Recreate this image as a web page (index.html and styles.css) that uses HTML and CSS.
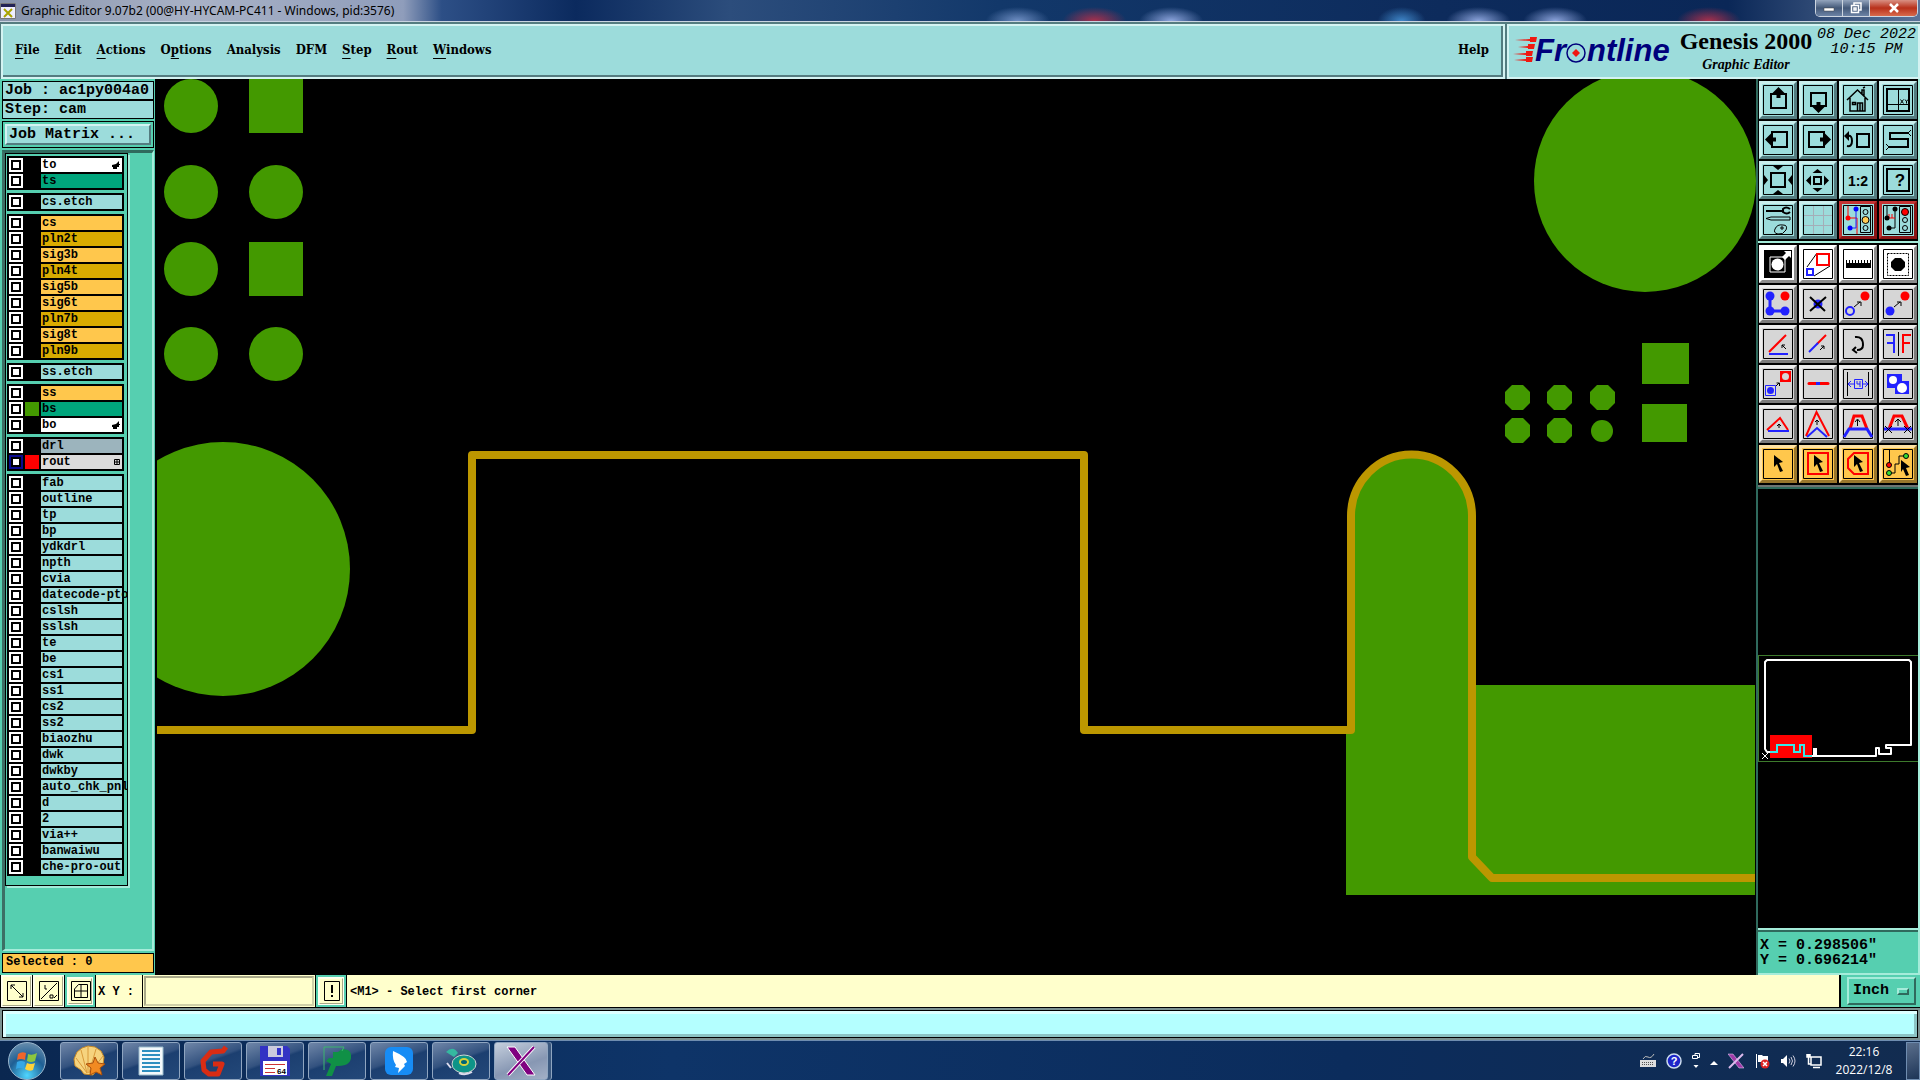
FILE: index.html
```html
<!DOCTYPE html>
<html lang="en">

<head>
  <meta charset="utf-8">
  <meta name="viewport" content="width=device-width, initial-scale=1">
  <title>Graphic Editor 9.07b2</title>
  <link rel="stylesheet" href="styles.css">
</head>

<body>
  <header class="titlebar">
    <svg class="app-icon" viewBox="0 0 16 16"><path fill="#eef" stroke="#777" d="M.5.5h15v15H.5z"/><path fill="#225" d="M1 1h14v3H1z"/><path stroke="#a9a300" stroke-width="2" d="M4 6l8 8M12 6l-8 8"/></svg>
    <h1>Graphic Editor 9.07b2 (00@HY-HYCAM-PC411 - Windows, pid:3576)</h1>
    <div class="window-buttons">
      <button class="win" aria-label="Minimize"><svg viewBox="0 0 12 12"><path fill="#fff" stroke="#444" stroke-width=".5" d="M1 6h10v3H1z"/></svg></button>
      <button class="win" aria-label="Restore"><svg viewBox="0 0 12 12"><path fill="none" stroke="#fff" stroke-width="1.5" d="M4 3V1h7v7H9M1.500 3.500h7v7h-7zM4 6h2v2H4z"/></svg></button>
      <button class="win close" aria-label="Close"><svg viewBox="0 0 12 12"><path stroke="#fff" stroke-width="2.500" d="M2 2l8 8M10 2l-8 8"/></svg></button>
    </div>
  </header>

  <div class="topbar">
    <nav class="menubar">
      <a href="#file"><u>F</u>ile</a>
      <a href="#edit"><u>E</u>dit</a>
      <a href="#actions"><u>A</u>ctions</a>
      <a href="#options">O<u>p</u>tions</a>
      <a href="#analysis">Analysis</a>
      <a href="#dfm">DFM</a>
      <a href="#step"><u>S</u>tep</a>
      <a href="#rout"><u>R</u>out</a>
      <a href="#windows"><u>W</u>indows</a>
      <a class="help" href="#help">Help</a>
    </nav>
    <div class="brand">
      <svg class="logo" viewBox="0 -6 162 46">
        <path fill="#f01810" d="M2 5l15-1V2h7l-1 5h-6V6zM5 12l10-1V9h7l-1 5h-6v-1zM0 19l13-1v-2h7l-1 5h-6v-1zM1 25l12-1v-2h7l-1 5h-6v-1z"/>
        <text class="logo-text" x="22" y="26">Fr</text>
        <text class="logo-text" x="74" y="26">ntline</text>
        <circle cx="63" cy="18" r="9" fill="none" stroke="#00007c" stroke-width="1.500"/>
        <path fill="#f01810" d="M63 14l4 4-4 4-4-4z"/>
      </svg>
      <div class="product"><strong>Genesis 2000</strong><em>Graphic Editor</em></div>
      <div class="date">08 Dec 2022<br>10:15 PM</div>
    </div>
  </div>

  <main class="workspace">
    <aside class="sidebar">
      <div class="job">Job : ac1py004a0</div>
      <div class="job">Step: cam</div>
      <div class="matrix"><button>Job Matrix ...</button></div>
      <div class="layers-panel">
        <div class="layers">
          <div class="group">
            <label class="layer white"><input type="checkbox"><i></i><span>to<svg class="hand" viewBox="0 0 8 8"><path d="M0 4l4-1 3-3v3h1v1H7v2H5v2H1V6H0z"/></svg></span></label>
            <label class="layer green"><input type="checkbox"><i></i><span>ts</span></label>
          </div>
          <div class="group">
            <label class="layer"><input type="checkbox"><i></i><span>cs.etch</span></label>
          </div>
          <div class="group">
            <label class="layer signal"><input type="checkbox"><i></i><span>cs</span></label>
            <label class="layer plane"><input type="checkbox"><i></i><span>pln2t</span></label>
            <label class="layer signal"><input type="checkbox"><i></i><span>sig3b</span></label>
            <label class="layer plane"><input type="checkbox"><i></i><span>pln4t</span></label>
            <label class="layer signal"><input type="checkbox"><i></i><span>sig5b</span></label>
            <label class="layer signal"><input type="checkbox"><i></i><span>sig6t</span></label>
            <label class="layer plane"><input type="checkbox"><i></i><span>pln7b</span></label>
            <label class="layer signal"><input type="checkbox"><i></i><span>sig8t</span></label>
            <label class="layer plane"><input type="checkbox"><i></i><span>pln9b</span></label>
          </div>
          <div class="group">
            <label class="layer"><input type="checkbox"><i></i><span>ss.etch</span></label>
          </div>
          <div class="group">
            <label class="layer signal"><input type="checkbox"><i></i><span>ss</span></label>
            <label class="layer green"><input type="checkbox"><i class="shown-green"></i><span>bs</span></label>
            <label class="layer white"><input type="checkbox"><i></i><span>bo<svg class="hand" viewBox="0 0 8 8"><path d="M0 4l4-1 3-3v3h1v1H7v2H5v2H1V6H0z"/></svg></span></label>
          </div>
          <div class="group">
            <label class="layer drill"><input type="checkbox"><i></i><span>drl</span></label>
            <label class="layer rout"><input type="checkbox" checked><i class="shown-red"></i><span>rout<svg class="hand small" viewBox="0 0 6 6"><path fill="none" stroke="#000" d="M.5.5h5v5h-5zM3 0v6M0 3h6"/></svg></span></label>
          </div>
          <div class="group">
            <label class="layer"><input type="checkbox"><i></i><span>fab</span></label>
            <label class="layer"><input type="checkbox"><i></i><span>outline</span></label>
            <label class="layer"><input type="checkbox"><i></i><span>tp</span></label>
            <label class="layer"><input type="checkbox"><i></i><span>bp</span></label>
            <label class="layer"><input type="checkbox"><i></i><span>ydkdrl</span></label>
            <label class="layer"><input type="checkbox"><i></i><span>npth</span></label>
            <label class="layer"><input type="checkbox"><i></i><span>cvia</span></label>
            <label class="layer"><input type="checkbox"><i></i><span>datecode-pto</span></label>
            <label class="layer"><input type="checkbox"><i></i><span>cslsh</span></label>
            <label class="layer"><input type="checkbox"><i></i><span>sslsh</span></label>
            <label class="layer"><input type="checkbox"><i></i><span>te</span></label>
            <label class="layer"><input type="checkbox"><i></i><span>be</span></label>
            <label class="layer"><input type="checkbox"><i></i><span>cs1</span></label>
            <label class="layer"><input type="checkbox"><i></i><span>ss1</span></label>
            <label class="layer"><input type="checkbox"><i></i><span>cs2</span></label>
            <label class="layer"><input type="checkbox"><i></i><span>ss2</span></label>
            <label class="layer"><input type="checkbox"><i></i><span>biaozhu</span></label>
            <label class="layer"><input type="checkbox"><i></i><span>dwk</span></label>
            <label class="layer"><input type="checkbox"><i></i><span>dwkby</span></label>
            <label class="layer"><input type="checkbox"><i></i><span>auto_chk_pnl</span></label>
            <label class="layer"><input type="checkbox"><i></i><span>d</span></label>
            <label class="layer"><input type="checkbox"><i></i><span>2</span></label>
            <label class="layer"><input type="checkbox"><i></i><span>via++</span></label>
            <label class="layer"><input type="checkbox"><i></i><span>banwaiwu</span></label>
            <label class="layer"><input type="checkbox"><i></i><span>che-pro-out</span></label>
          </div>
        </div>
      </div>
      <div class="selected">Selected : 0</div>
    </aside>

    <section class="canvas">
      <svg viewBox="157 79 1599 896" preserveAspectRatio="xMinYMin slice">
        <g fill="#439900">
          <circle cx="191" cy="106" r="27"/><path d="M249 79h54v54h-54z"/>
          <circle cx="191" cy="192" r="27"/><circle cx="276" cy="192" r="27"/>
          <circle cx="191" cy="269" r="27"/><path d="M249 242h54v54h-54z"/>
          <circle cx="191" cy="354" r="27"/><circle cx="276" cy="354" r="27"/>
          <circle cx="223" cy="569" r="127"/>
          <circle cx="1645" cy="181" r="111"/>
          <path d="M1642 343h47v41h-47zM1642 404h45v38h-45z"/>
          <path id="pad" d="M1512 385h11l7 7v11l-7 7h-11l-7-7v-11z"/>
          <use href="#pad" x="42"/><use href="#pad" x="85"/>
          <use href="#pad" y="33"/><use href="#pad" x="42" y="33"/>
          <circle cx="1602" cy="431" r="11"/>
          <path d="M1346 895V730h5V516a60 61 0 0 1 121 0v169h283v210z"/>
        </g>
        <path fill="none" stroke="#bc9700" stroke-width="8" stroke-linejoin="round" d="M150 730h322V455h612v275h267V516a60 61 0 0 1 121 0v341l20 21h263"/>
      </svg>
    </section>

    <aside class="tools">
      <div class="toolbox view">
        <button aria-label="Pan up"><svg viewBox="0 0 30 30"><path class="f" d="M.5.5h29v29H.5z"/><path class="b" d="M8 9h15v14H8z"/><path d="M15.500 2l6 6h-4v5h-4V8h-4z"/></svg></button>
        <button aria-label="Pan down"><svg viewBox="0 0 30 30"><path class="f" d="M.5.5h29v29H.5z"/><path class="b" d="M8 8h15v13H8z"/><path d="M15.500 28l-6-6h4v-5h4v5h4z"/></svg></button>
        <button aria-label="Home"><svg viewBox="0 0 30 30"><path class="f" d="M.5.5h29v29H.5z"/><path class="f" stroke-width="1.500" d="M4 15L14.500 5 25 15M7 13v13h15V13M19 9V5h2v6M14.500 26v-8h5v8M17 18v8M9.500 17.500h3v2h-3zM20 3l2-1"/></svg></button>
        <button aria-label="XY view"><svg viewBox="0 0 30 30"><path class="f" d="M.5.5h29v29H.5z"/><path class="b" d="M4 4h22v22H4z"/><path class="f" d="M15.500 4v22M4 19.500h22M17.500 14.500l3 4M20.500 14.500l-3 4M22 14.500l1.500 2 1.500-2M23.500 16v2.500"/></svg></button>
        <button aria-label="Pan left"><svg viewBox="0 0 30 30"><path class="f" d="M.5.5h29v29H.5z"/><path class="b" d="M9 7h15v15H9z"/><path d="M2 14.500l6-6v4h5v4H8v4z"/></svg></button>
        <button aria-label="Pan right"><svg viewBox="0 0 30 30"><path class="f" d="M.5.5h29v29H.5z"/><path class="b" d="M6 7h15v15H6z"/><path d="M28 14.500l-6-6v4h-5v4h5v4z"/></svg></button>
        <button aria-label="Previous view"><svg viewBox="0 0 30 30"><path class="f" d="M.5.5h29v29H.5z"/><path class="b" d="M14 9h12v13H14zM5 11q4-1 4 5t-5 5"/><path d="M1 11l5-5v10z"/></svg></button>
        <button aria-label="Snake"><svg viewBox="0 0 30 30"><path class="f" d="M.5.5h29v29H.5z"/><path class="b" d="M25 8H7v6h18v8H6"/><path class="f" d="M25 8l3-3M25 8l3 3M6 22l-3-3M6 22l-3 3"/></svg></button>
        <button aria-label="Zoom out"><svg viewBox="0 0 30 30"><path class="f" d="M.5.5h29v29H.5z"/><path class="b" d="M8 8h14v14H8z"/><path d="M10 1h10l-5 4zM10 29h10l-5-4zM1 10v10l4-5zM29 10v10l-4-5z"/></svg></button>
        <button aria-label="Zoom in"><svg viewBox="0 0 30 30"><path class="f" d="M.5.5h29v29H.5z"/><path class="b" d="M11 12h7v7h-7z"/><path d="M14.500 4l5 4h-10zM14.500 27l5-4h-10zM3 15.500l5-5v10zM26 15.500l-5-5v10z"/></svg></button>
        <button><svg viewBox="0 0 30 30"><path class="f" d="M.5.5h29v29H.5z"/><text x="15" y="21" class="ratio">1:2</text></svg></button>
        <button><svg viewBox="0 0 30 30"><path class="f" d="M.5.5h29v29H.5z"/><path class="b" d="M4 4h22v22H4z"/><text x="17" y="21" class="ask">?</text></svg></button>
        <button aria-label="Options"><svg viewBox="0 0 30 30"><path class="f" d="M.5.5h29v29H.5z"/><path class="b" d="M3 6h16M27 4q-4-3-7 0v3q4 3 7 0"/><path class="f" d="M27 12v3H8l-5-1.500 5-1.500zM12 24q2-5 8-4 5 0 3 5-3 5-8 4-5-1-3-5zM18 22h2v2h-2z"/></svg></button>
        <button aria-label="Grid"><svg viewBox="0 0 30 30"><path fill="none" stroke="#a4aeb8" d="M10.500 0v30M20.500 0v30M0 10.500h30M0 20.500h30"/><path class="f" d="M.5.5h29v29H.5z"/></svg></button>
        <button class="red" aria-label="Net on"><svg viewBox="0 0 30 30"><path class="f" d="M.5.5h29v29H.5z"/><path class="r thin" d="M5 1v12h9v16"/><path class="u thin" d="M13 4v19H6"/><circle cx="13" cy="4" r="2.500" fill="#00f"/><circle cx="5" cy="13" r="2.500" fill="#f00"/><circle cx="7" cy="23" r="2.500" fill="#00f"/><path class="f" d="M17.500 1.500h10v26h-10z"/><circle class="f" cx="22.500" cy="7" r="2.500"/><circle cx="22.500" cy="15" r="3.500" fill="#fc5" stroke="#000"/><circle class="f" cx="22.500" cy="23" r="2.500"/></svg></button>
        <button class="red" aria-label="Net off"><svg viewBox="0 0 30 30"><path class="f" d="M.5.5h29v29H.5z"/><path class="f" d="M4 1v12M12 4v19H6"/><path class="r thin" d="M5 13h7M6 9v4M9 9v4"/><circle cx="12" cy="4" r="2.500"/><circle cx="4" cy="13" r="2.500"/><circle cx="6" cy="23" r="2.500"/><path class="f" d="M16.500 1.500h11v26h-11z"/><circle cx="22" cy="7" r="3.500" fill="#f00" stroke="#000"/><circle class="f" cx="22" cy="15" r="2.500"/><circle class="f" cx="22" cy="23" r="2.500"/></svg></button>
      </div>
      <div class="toolbox edit">
        <button class="white" aria-label="Select feature"><svg viewBox="0 0 30 30"><path d="M1 1h28v28H1z"/><path fill="none" stroke="#fff" d="M7 8h15v15H7z"/><circle cx="14.500" cy="15.500" r="6" fill="#fff"/><path fill="#fff" d="M19 8l4-4-2-2h7v7l-2-2-4 4z"/></svg></button>
        <button class="white" aria-label="Rescale"><svg viewBox="0 0 30 30"><path class="f" d="M.5.5h29v29H.5z"/><path class="f" d="M4 18L14 4M11 27l16-10"/><path class="r" d="M14 5h12v11H14z"/><path class="u" d="M4 20h6v6H4z"/></svg></button>
        <button class="white" aria-label="Measure"><svg viewBox="0 0 30 30"><path class="f" d="M.5.5h29v29H.5z"/><path d="M3 14h25v5H3z"/><path class="f" d="M3.500 11v3M6.500 11v3M9.500 11v3M12.500 11v3M15.500 11v3M18.500 11v3M21.500 11v3M24.500 11v3M27.500 11v3"/></svg></button>
        <button class="white" aria-label="Highlight"><svg viewBox="0 0 30 30"><path class="f" d="M.5.5h29v29H.5z"/><path class="f" stroke-dasharray="2 1" d="M4.500 4.500h21v22h-21z"/><path d="M12 9h6l4 4v5l-4 4h-6l-4-4v-5z"/></svg></button>

        <button aria-label="Connect"><svg viewBox="0 0 30 30"><path class="f" d="M.5.5h29v29H.5z"/><path fill="none" stroke="#22f" stroke-width="3" d="M7 7v15h15"/><g fill="#22f"><circle cx="7" cy="7" r="4.500"/><circle cx="7" cy="22" r="4.500"/><circle cx="22" cy="22" r="4.500"/></g><circle cx="22" cy="7" r="4.500" fill="red"/></svg></button>
        <button aria-label="Delete"><svg viewBox="0 0 30 30"><path class="f" d="M.5.5h29v29H.5z"/><circle cx="15" cy="15" r="4.500" fill="#22f"/><path class="b" d="M7 8l15 14M23 8L7 22"/></svg></button>
        <button aria-label="Copy"><svg viewBox="0 0 30 30"><path class="f" d="M.5.5h29v29H.5z"/><circle class="u" cx="7" cy="22" r="4"/><circle cx="22" cy="7" r="4.500" fill="red"/><path class="f" d="M11 18l6-5M14 13h4v4"/></svg></button>
        <button aria-label="Move"><svg viewBox="0 0 30 30"><path class="f" d="M.5.5h29v29H.5z"/><circle cx="7" cy="22" r="4.500" fill="#22f"/><circle cx="22" cy="7" r="4.500" fill="red"/><path class="f" d="M11 18l6-5M14 13h4v4"/></svg></button>

        <button aria-label="Angle"><svg viewBox="0 0 30 30"><path class="f" d="M.5.5h29v29H.5z"/><path class="r" d="M6 23L23 6"/><path class="u" d="M6 25h19"/><path class="f" d="M23 20l-4-4M19 19v-3h3"/></svg></button>
        <button aria-label="Stretch"><svg viewBox="0 0 30 30"><path class="f" d="M.5.5h29v29H.5z"/><path class="r" d="M14 15l9-9"/><path class="u" d="M6 23l9-9"/><path class="f" d="M17 21l4-4M18 17h3v3"/></svg></button>
        <button aria-label="Rotate"><svg viewBox="0 0 30 30"><path class="f" d="M.5.5h29v29H.5z"/><path class="b" d="M12 8q8-1 8 8 0 5-6 5M13 18l-3 3 4 3"/></svg></button>
        <button aria-label="Mirror"><svg viewBox="0 0 30 30"><path class="f" d="M.5.5h29v29H.5z"/><path class="u" d="M3 6h8v18M11 14H4"/><path class="r" d="M28 6h-8v18M20 14h7"/><path class="f" d="M15.500 3v24"/></svg></button>

        <button aria-label="Change symbol"><svg viewBox="0 0 30 30"><path class="f" d="M.5.5h29v29H.5z"/><path fill="red" d="M17 2h11v11H17z"/><circle cx="22.500" cy="7.500" r="3.500" fill="#d6d6d6"/><path fill="none" stroke="#22f" d="M2.500 16.500h10v10h-10z"/><circle cx="7.500" cy="21.500" r="3.500" fill="#22f"/><path class="f" d="M13 17l3-3M13.500 14h3v3"/></svg></button>
        <button aria-label="Break"><svg viewBox="0 0 30 30"><path class="f" d="M.5.5h29v29H.5z"/><path class="r wide" stroke-linecap="round" d="M6 14.500h19"/><path class="u wide" d="M13 14.500h4"/></svg></button>
        <button aria-label="Space"><svg viewBox="0 0 30 30"><path class="f" d="M.5.5h29v29H.5z"/><path class="f" d="M4.500 3v24M25.500 3v24"/><path class="u thin" d="M6 15h5M20 15h4M8 12l-3 3 3 3M22 12l3 3-3 3M11.500 10.500h8v9h-8zM14 12v3h3M17 12v6"/></svg></button>
        <button aria-label="Merge"><svg viewBox="0 0 30 30"><path class="f" d="M.5.5h29v29H.5z"/><path fill="#22f" d="M4 5h15v7h7v13H12v-6H4z"/><g fill="#fff"><circle cx="10" cy="11" r="4"/><circle cx="19" cy="19" r="5"/></g></svg></button>

        <button aria-label="Triangle"><svg viewBox="0 0 30 30"><path class="f" d="M.5.5h29v29H.5z"/><path class="r" d="M4 21L17 9l8 12"/><path class="u" d="M5 22h21"/><path class="f" d="M16 19v-4M14 17l2-2 2 2"/></svg></button>
        <button aria-label="Peak"><svg viewBox="0 0 30 30"><path class="f" d="M.5.5h29v29H.5z"/><path class="r" d="M3 27L13.500 3 26 27"/><path class="u" d="M4 28l10-9 10 9"/><path class="f" d="M14 16v-5M12 13l2-2 2 2"/></svg></button>
        <button aria-label="Trapezoid"><svg viewBox="0 0 30 30"><path class="f" d="M.5.5h29v29H.5z"/><path class="r wide" d="M7 20l4-13h8l5 13"/><path class="u wide" d="M1 28l5-8h18l5 8"/><path class="f" d="M14.500 17v-6M12 13l2.500-3 2.500 3"/></svg></button>
        <button aria-label="Trapezoid cut"><svg viewBox="0 0 30 30"><path class="f" d="M.5.5h29v29H.5z"/><path class="r wide" d="M6 20l5-13h8l6 13"/><path class="u wide" d="M1 20h28"/><path class="f" d="M15 17v-6M12 13l3-3 3 3M2 17l7 7M9 17l-7 7M21 17l7 7M28 17l-7 7"/></svg></button>

        <button class="orange" aria-label="Select"><svg viewBox="0 0 30 30"><path class="f" d="M.5.5h29v29H.5z"/><path d="M11 6l9 7-4 1 4 8-3 1-3-8-3 3z"/></svg></button>
        <button class="orange" aria-label="Select frame"><svg viewBox="0 0 30 30"><path class="f" d="M.5.5h29v29H.5z"/><path class="r" d="M5 4h20v21H5z"/><path d="M11 6l9 7-4 1 4 8-3 1-3-8-3 3z"/></svg></button>
        <button class="orange" aria-label="Select polygon"><svg viewBox="0 0 30 30"><path class="f" d="M.5.5h29v29H.5z"/><path class="r" d="M11 4h14v21H11l-6-6v-9z"/><path d="M11 6l9 7-4 1 4 8-3 1-3-8-3 3z"/></svg></button>
        <button class="orange" aria-label="Select net"><svg viewBox="0 0 30 30"><path class="f" d="M.5.5h29v29H.5z"/><path class="f" d="M6.500 1v15M6 24h6v-9h4V7h7"/><circle cx="6" cy="16" r="2.500" fill="red" stroke="#000"/><circle cx="6" cy="24" r="2.500" fill="#3d3" stroke="#000"/><circle cx="23" cy="7" r="2.500" fill="#3d3" stroke="#000"/><path d="M18 11l9 7-4 1 3 7-3 1-3-7-2 3z"/></svg></button>
      </div>
      <div class="overview">
        <svg viewBox="0 0 160 107">
          <path fill="none" stroke="#3d7a2c" d="M0 .5h160M0 106.500h160M.5 0v107"/>
          <path fill="red" d="M12 80h42v23H12z"/>
          <path fill="none" stroke="#fff" stroke-width="2" stroke-linejoin="round" d="M12 97H9l-2-3V7l2-2h142l2 2v83h-25v3h5v6h-12v-6h-3v8H54"/>
          <path fill="#fff" d="M55 93h4v9h-4z"/>
          <path fill="none" stroke="#35e8e8" stroke-width="2" d="M12 97h7v-7h17v7h6v-7h4v11h8"/>
          <path class="f" d="M4 98l6 6M10 98l-6 6"/>
        </svg>
      </div>
      <div class="coords">X = 0.298506"<br>Y = 0.696214"</div>
    </aside>
  </main>

  <form class="command">
    <button type="button" class="snap" aria-label="Diagonal"><svg viewBox="0 0 20 20"><path class="f" d="M.5.5h19v19H.5zM4 4l12 12M4 8V4h4M12 16h4v-4"/></svg></button>
    <button type="button" class="snap" aria-label="Absolute"><svg viewBox="0 0 20 20"><path class="f" d="M.5.5h19v19H.5zM2 18L18 2M6 4v4h2M11 14h3v3h-3zM18 14l-3 3"/></svg></button>
    <span class="mint"><button type="button" class="snap" aria-label="Snap grid"><svg viewBox="0 0 20 20"><path class="f" d="M.5.5h19v19H.5zM3.500 16.500V8l4-4.500h9v13zM10 3v14M3 10h14"/></svg></button></span>
    <label class="xy-label" for="xy">X Y :</label>
    <input class="xy" id="xy" type="text">
    <span class="mint"><button type="button" class="snap" aria-label="Alert"><svg viewBox="0 0 20 20"><path class="f" d="M2.500.5h15v19h-15z"/><path class="b" d="M10 4v8M10 14v2"/></svg></button></span>
    <output class="message">&lt;M1&gt; - Select first corner</output>
    <label class="units"><select aria-label="Units"><option>Inch</option></select><i></i></label>
  </form>
  <div class="statusline"><div></div></div>

  <footer class="taskbar">
    <button class="orb" aria-label="Start"><svg viewBox="0 0 24 24"><path fill="#f0652a" d="M3 5q4-3 8-1l-1 7q-4-2-8 0z"/><path fill="#8cc63e" d="M13 5q4 2 9-1l-2 8q-4 2-8 0z"/><path fill="#35a7e6" d="M2 13q4-2 8 0l-1 7q-4-2-8 0z"/><path fill="#ffd23a" d="M12 14q4 2 8 0l-2 7q-4 2-8-1z"/></svg></button>
    <button class="task" aria-label="Shell"><svg viewBox="0 0 32 32"><path fill="#f6d37e" stroke="#c78a28" d="M11 29L8 25 2 21 1 14l3-7 5-4 6-2 7 1 6 4 3 6-1 8-6 5-4 5z"/><path fill="none" stroke="#d99a3a" d="M14 28L3 13M14 28L8 5M15 28V2M16 28l7-24M17 28L30 11"/><path fill="#f18a22" stroke="#a94f0c" d="M22 12l3 6 7 1-5 4 2 7-6-3-6 3 1-7-5-4 7-1z"/></svg></button>
    <button class="task" aria-label="Document"><svg viewBox="0 0 32 32"><path fill="#f4f9fc" stroke="#9bc" d="M4 2h24v28H4z"/><path stroke="#2e8fc0" stroke-width="2" d="M7 6h18M7 10h18M7 14h18M7 18h18M7 22h18M7 26h18"/></svg></button>
    <button class="task" aria-label="G tool"><svg viewBox="0 0 32 32"><path fill="none" stroke="#d92c14" stroke-width="5" stroke-linejoin="round" d="M29 2l-3 4-12 1-8 9 1 9 5 4h9l4-10h-9"/></svg></button>
    <button class="task" aria-label="Save"><svg viewBox="0 0 32 32"><path fill="#3333c4" d="M1 1h27l3 3v27H1z"/><path fill="#ccd" d="M9 1h15v11H9z"/><path fill="#33c" d="M18 3h4v7h-4z"/><path fill="#fff" d="M4 16h24v14H4z"/><path stroke="#c33" d="M6 19.500h20M6 23.500h10M6 27.500h10"/><text x="18" y="29" class="tiny">64</text></svg></button>
    <button class="task" aria-label="P tool"><svg viewBox="0 0 32 32"><path fill="#109046" d="M12 7h5l4-3q9 0 9 6 1 11-13 11h-2l-4 10H5l5-12-5-3 3-3h4z"/><path fill="none" stroke="#3bb56f" d="M3 25V2h20l-2 4"/></svg></button>
    <button class="task" aria-label="Wing"><svg viewBox="0 0 32 32"><rect x="2" y="2" width="28" height="28" rx="6" fill="#178cf5"/><path fill="#fff" d="M10 6q14 6 14 11l-3 2 1 2-7 7 1-5-4-1 1-2q-4-5-3-14z"/></svg></button>
    <button class="task" aria-label="Disc"><svg viewBox="0 0 32 32"><ellipse cx="19" cy="19" rx="12" ry="9" fill="#0e9488" stroke="#cfd6d2"/><ellipse cx="19" cy="17" rx="5" ry="4" fill="#d8d23a"/><ellipse cx="19" cy="17" rx="3" ry="2" fill="#067"/><path fill="#35b8a0" d="M1 7q7-7 12 1l-4 4z"/><path fill="none" stroke="#dde" stroke-width="2" d="M2 18l4 5M14 28q6 3 13-1"/></svg></button>
    <button class="task active" aria-label="X server"><svg viewBox="0 0 32 32"><path fill="#800080" stroke="#fff" d="M2 2h8l20 28h-8z"/><path stroke="#fff" stroke-width="4" d="M29 2L3 30"/><path stroke="#800080" stroke-width="2" d="M29 2L3 30"/></svg></button>
    <div class="tray">
      <svg viewBox="0 0 16 16"><path fill="#ddd" d="M0 7h16v7H0z"/><path fill="none" stroke="#bbb" d="M3 6q2-4 5-2t6-3"/><path stroke="#555" stroke-dasharray="1 1" d="M2 9.500h12M2 11.500h12"/></svg>
      <svg viewBox="0 0 16 16"><circle cx="8" cy="8" r="7" fill="#1d26c8" stroke="#cde" stroke-width="1.500"/><text x="8" y="12" class="q">?</text></svg>
      <svg class="slim" viewBox="0 0 8 16"><path fill="none" stroke="#fff" d="M3 2.500V.5h4.500v4H6M.5 2.500h5v3h-5z"/><path fill="#fff" d="M1.500 12h5L4 15z"/></svg>
      <svg class="slim" viewBox="0 0 8 16"><path fill="#fff" d="M0 12h8L4 8z"/></svg>
      <svg viewBox="0 0 16 16"><path fill="#a03aa8" stroke="#edf" stroke-width=".5" d="M0 1h5l11 14h-5z"/><path stroke="#dbe" stroke-width="2" d="M15 1L1 15"/></svg>
      <svg viewBox="0 0 16 16"><path fill="#fff" d="M2 1h1v14H2zM4 2h4l1 1h5v7H9L8 9H4z"/><circle cx="11" cy="11" r="4.500" fill="#d22"/><path stroke="#fff" stroke-width="1.500" d="M9 9l4 4M13 9l-4 4"/></svg>
      <svg viewBox="0 0 16 16"><path fill="#fff" d="M1 6h2l4-4v12l-4-4H1z"/><path fill="none" stroke="#ccd" d="M9 5.500q2 2.500 0 5M11 4q3 4 0 8M13 2.500q4 5.500 0 11"/></svg>
      <svg viewBox="0 0 16 16"><path fill="none" stroke="#fff" stroke-width="1.500" d="M5 4h10v8H5zM7 14.500h7M2.500 1v10H5M1 1v3h3V1"/></svg>
    </div>
    <time class="clock">22:16<br>2022/12/8</time>
    <button class="desktop" aria-label="Show desktop"></button>
  </footer>
</body>

</html>
```
FILE: styles.css
```css
* {
  margin: 0;
  padding: 0;
  box-sizing: border-box;
}

body {
  height: 100vh;
  display: flex;
  flex-direction: column;
  background: #000;
  color: #000;
  overflow: hidden;
  font: bold 12px/14px "Liberation Mono", monospace;
}

button,
input,
select {
  font: inherit;
  color: inherit;
}

a {
  color: inherit;
  text-decoration: none;
}

svg {
  display: block;
}

/* title bar */
.titlebar {
  flex: none;
  height: 22px;
  display: flex;
  align-items: center;
  gap: 5px;
  background:
    radial-gradient(ellipse 32px 14px at 89% 100%, #a8304c, transparent),
    radial-gradient(ellipse 32px 14px at 81% 100%, #8da5dd, transparent),
    radial-gradient(ellipse 32px 14px at 77% 100%, #8da5dd, transparent),
    radial-gradient(ellipse 24px 14px at 73% 100%, #3f86c8, transparent),
    radial-gradient(ellipse 32px 14px at 61% 100%, #8da5dd, transparent),
    radial-gradient(ellipse 32px 14px at 57% 100%, #a8304c, transparent),
    radial-gradient(ellipse 32px 14px at 53% 100%, #6f8fc4, transparent),
    linear-gradient(90deg, #8793ab, #a9b2c6 10%, #8f9dbb 21%, #2d4f86 23%, #0b2a5e 30%, #2c4d7c 38%, #12386a 52%, #0d2b5c 75%, #0a2757 90%, #5b7399);
  border-bottom: 1px solid #c9d3e0;
}

.titlebar h1 {
  flex: 1;
  font: 12px/18px "Noto Sans", sans-serif;
}

.app-icon {
  width: 16px;
  height: 16px;
}

.window-buttons {
  display: flex;
  align-self: flex-start;
  margin-right: 2px;
  border: 1px solid #ccd5e0;
  border-top: 0;
  border-radius: 0 0 5px 5px;
  overflow: hidden;
}

.win {
  width: 27px;
  height: 16px;
  border: 0;
  border-right: 1px solid #ccd5e0;
  background: linear-gradient(#93a4bd, #435878 50%, #6c83a5);
  display: grid;
  place-items: center;
}

.win svg {
  width: 12px;
  height: 12px;
}

.win.close {
  width: 47px;
  border-right: 0;
  background: linear-gradient(#d99083, #b8301a 50%, #d96a4c);
}

/* menu and logo */
.topbar {
  flex: none;
  height: 57px;
  display: flex;
  background: #547c80;
}

.menubar,
.brand {
  display: flex;
  align-items: center;
  background: #9cdcdb;
  border: 2px solid #d4f3f2;
  box-shadow: inset -2px -2px #547c80;
  margin-top: 2px;
}

.menubar {
  flex: 1;
  gap: 15px;
  margin-left: 1px;
  padding: 0 14px 4px 12px;
  font: bold 13px/20px "DejaVu Serif Condensed", "DejaVu Serif", serif;
}

.menubar u {
  text-underline-offset: 4px;
}

.help {
  margin-left: auto;
}

.brand {
  width: 413px;
  margin-left: 2px;
  padding: 0 2px 0 4px;
  box-shadow: none;
  justify-content: space-between;
}

.logo {
  width: 162px;
  height: 46px;
}

.logo-text {
  font: italic bold 31px "Liberation Sans", sans-serif;
  fill: #00007c;
}

.product {
  text-align: center;
  font-family: "Liberation Serif", serif;
}

.product strong {
  display: block;
  font-size: 24px;
  line-height: 26px;
}

.product em {
  display: block;
  font-size: 14px;
  line-height: 22px;
}

.date {
  align-self: flex-start;
  padding-top: 1px;
  text-align: center;
  font-size: 15px;
  line-height: 15px;
  font-style: italic;
  font-weight: normal;
}

/* workspace */
.workspace {
  flex: 1;
  min-height: 0;
  display: flex;
}

.sidebar {
  flex: none;
  width: 155px;
  margin: 0 2px 0 0;
  padding: 2px 1px 2px 2px;
  display: flex;
  flex-direction: column;
  background: #56cfb0;
}

.job,
.matrix {
  flex: none;
  font-size: 15px;
  line-height: 17px;
  background: #9cdcdb;
  border: 1px solid #000;
  padding-left: 2px;
  white-space: nowrap;
}

.job + .job {
  margin-bottom: 2px;
}

.matrix {
  padding: 2px;
  margin-bottom: 2px;
  background: #56cfb0;
}

.matrix button {
  display: block;
  width: 100%;
  padding: 0 2px;
  text-align: left;
  background: #9cdcdb;
  border: 2px solid;
  border-color: #d4f3f2 #547c80 #547c80 #d4f3f2;
}

.layers-panel {
  flex: 1;
  min-height: 0;
  border-top: 3px solid #2f6a5d;
  border-left: 3px solid #3c6f65;
  border-right: 2px solid #a5ecda;
  border-bottom: 2px solid #a5ecda;
  margin-bottom: 2px;
}

.layers {
  width: 123px;
  height: 733px;
  padding: 2px 1px;
  border: 1px solid #000;
  box-shadow: 2px 2px #a5ecda;
  display: flex;
  flex-direction: column;
  gap: 3px;
  overflow: hidden;
}

.group {
  width: 117px;
  flex: none;
  background: #000;
  padding: 2px 2px 0;
}

.layer {
  display: flex;
  height: 16px;
  padding-bottom: 2px;
  gap: 2px;
}

.layer input {
  appearance: none;
  width: 14px;
  height: 14px;
  background: #fff;
  border: 2px solid #fff;
  outline: 2px solid #000;
  outline-offset: -4px;
}

.layer input:checked {
  border-color: #0a0a90;
}

.layer i {
  width: 14px;
}

.shown-green {
  background: #439900;
}

.shown-red {
  background: #f00;
}

.layer span {
  flex: 1;
  width: 81px;
  padding-left: 1px;
  display: flex;
  align-items: center;
  background: #9cdcdb;
  white-space: nowrap;
  line-height: 14px;
}

.white span {
  background: #fff;
}

.green span {
  background: #00a57c;
}

.signal span {
  background: #ffc74c;
}

.plane span {
  background: #d9ab00;
}

.drill span {
  background: #9cb4bd;
}

.rout span {
  background: #dcdcdc;
}

.hand {
  width: 8px;
  height: 8px;
  margin-left: auto;
  margin-right: 2px;
}

.hand.small {
  width: 6px;
  height: 6px;
}

.selected {
  flex: none;
  height: 20px;
  padding-left: 3px;
  line-height: 17px;
  background: #ffc74c;
  border: 1px solid #000;
}

.canvas {
  flex: 1;
  min-width: 0;
  overflow: hidden;
}

.canvas svg {
  width: 100%;
  height: 100%;
}

/* tool panel */
.tools {
  flex: none;
  width: 164px;
  display: flex;
  flex-direction: column;
  border-left: 2px solid #2f6a5d;
  border-right: 2px solid #a5ecda;
}

.toolbox {
  display: grid;
  grid-template-columns: repeat(4, 38px);
  gap: 2px;
  padding: 2px 0 2px 1px;
}

.view {
  border-bottom: 2px solid #a5ecda;
}

.edit {
  border-bottom: 2px solid #6f7472;
}

.toolbox button {
  height: 38px;
  padding: 1px;
  border: 3px solid;
  border-color: #c9efed #547c80 #547c80 #c9efed;
  background: #9cdcdb;
}

.edit button {
  border-color: #ededed #7c7c7c #7c7c7c #ededed;
  background: #d6d6d6;
}

.toolbox .white {
  border-color: #fff #8c8c8c #8c8c8c #fff;
  background: #fff;
}

.toolbox .orange {
  border-color: #ffe2a4 #99762c #99762c #ffe2a4;
  background: #ffc74c;
}

.toolbox .red {
  border-color: #c43434 #8c1414 #8c1414 #c43434;
}

.toolbox svg {
  width: 30px;
  height: 30px;
}

.f,
.b,
.r,
.u {
  fill: none;
  stroke: #000;
}

.b {
  stroke-width: 2;
}

.r {
  stroke: #f00;
  stroke-width: 2;
}

.u {
  stroke: #22f;
  stroke-width: 2;
}

.thin {
  stroke-width: 1;
}

.wide {
  stroke-width: 3;
}

.ratio {
  font: bold 14px "Liberation Sans", sans-serif;
  text-anchor: middle;
}

.ask {
  font: bold 17px "Liberation Sans", sans-serif;
  text-anchor: middle;
}

.overview {
  flex: 1;
  display: flex;
  flex-direction: column;
  justify-content: center;
  border-top: 2px solid #2f6a5d;
  border-bottom: 2px solid #a5ecda;
}

.overview svg {
  width: 100%;
}

.overview .f {
  stroke: #fff;
}

.coords {
  height: 45px;
  padding: 6px 2px;
  font-size: 15px;
  line-height: 15px;
  background: #56cfb0;
  border-top: 2px solid #2f6a5d;
  border-bottom: 2px solid #a5ecda;
}

/* command line */
.command {
  flex: none;
  height: 33px;
  margin-left: 1px;
  padding-bottom: 1px;
  display: flex;
  gap: 1px;
}

.snap {
  width: 31px;
  padding: 2px;
  display: grid;
  place-items: center;
  border: 2px solid;
  border-color: #ffffe9 #a8a888 #a8a888 #ffffe9;
  outline: 1px solid #fffff0;
  outline-offset: -1px;
  background: #ffffcc;
}

.snap svg {
  width: 20px;
  height: 20px;
}

.mint {
  display: flex;
  padding: 2px;
  background: #56cfb0;
}

.mint .snap {
  width: 26px;
}

.xy-label {
  width: 46px;
  padding-left: 2px;
  line-height: 34px;
  background: #ffffcc;
}

.xy {
  width: 172px;
  padding: 2px 4px;
  border: 3px solid;
  border-color: #a8a888 #d0d0a8 #d0d0a8 #a8a888;
  background: #ffffcc;
  outline: 1px solid #ffffcc;
  outline-offset: -1px;
}

.message {
  flex: 1;
  padding-left: 3px;
  line-height: 34px;
  background: #ffffcc;
}

.units {
  position: relative;
  width: 79px;
  margin-left: 1px;
  padding: 2px 4px 2px 6px;
  background: #56cfb0;
}

.units select {
  appearance: none;
  width: 100%;
  height: 28px;
  padding-left: 4px;
  font-size: 15px;
  border: 2px solid;
  border-color: #a5ecda #2f6a5d #2f6a5d #a5ecda;
  background: #56cfb0;
}

.units i {
  position: absolute;
  right: 11px;
  top: 13px;
  width: 12px;
  height: 7px;
  border: 2px solid;
  border-color: #a5ecda #2f6a5d #2f6a5d #a5ecda;
}

.statusline {
  flex: none;
  height: 32px;
  padding: 2px 2px 1px;
  background: #7c9291;
}

.statusline div {
  height: 28px;
  border: 1px solid #000;
  background: #b4ffff;
  box-shadow: inset 3px 3px #dcffff, inset -3px -3px #8cc4c4;
}

/* taskbar */
.taskbar {
  flex: none;
  height: 40px;
  display: flex;
  align-items: center;
  gap: 4px;
  border-top: 1px solid #6f8db0;
  background: linear-gradient(90deg, #0a2750, #0e3468 35%, #0b2c5c 70%, #122c50);
  color: #fff;
}

.orb {
  width: 38px;
  height: 38px;
  margin: 0 10px 0 8px;
  border: 1px solid #9bb8cf;
  border-radius: 50%;
  background: radial-gradient(circle at 50% 90%, #4fd6ff, #1f5f94 50%, #7d9ab3);
  display: grid;
  place-items: center;
}

.orb svg {
  width: 24px;
  height: 24px;
}

.task {
  width: 58px;
  height: 38px;
  border: 1px solid #8fa5c0;
  border-radius: 3px;
  background: linear-gradient(160deg, #6f86a8, #33527f 45%, #1c3f70 50%, #234879);
  display: grid;
  place-items: center;
}

.task svg {
  width: 32px;
  height: 32px;
}

.task.active {
  width: 54px;
  background: linear-gradient(160deg, #c5cfdd, #8797b3 60%, #a3b0c6);
  box-shadow: 3px 0 #3a587f, 4px 0 #8fa5c0;
}

.tiny {
  font: bold 8px "Liberation Sans", sans-serif;
}

.tray {
  margin-left: auto;
  display: flex;
  align-items: center;
  gap: 10px;
}

.tray svg {
  width: 16px;
  height: 16px;
}

.tray .slim {
  width: 8px;
}

.q {
  font: bold 11px "Liberation Sans", sans-serif;
  fill: #fff;
  text-anchor: middle;
}

.clock {
  width: 76px;
  text-align: center;
  font: 12px/18px "Open Sans", sans-serif;
}

.desktop {
  width: 14px;
  height: 38px;
  border: 1px solid #6f8db0;
  background: linear-gradient(160deg, #5b6f8c, #1d3557);
}
```
